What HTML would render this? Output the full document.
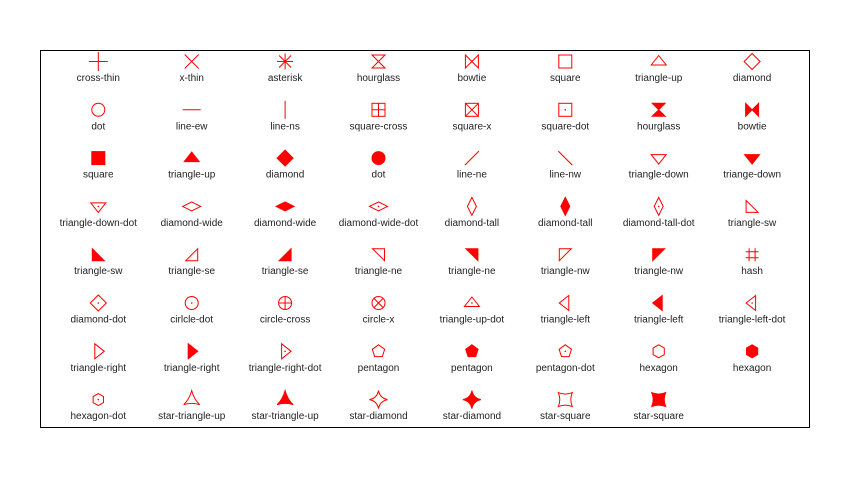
<!DOCTYPE html>
<html><head><meta charset="utf-8"><style>
html,body{margin:0;padding:0;background:#fff}
svg{display:block}
.o{fill:none;stroke:#f00;stroke-width:1}
.f{fill:#f00;stroke:#f00;stroke-width:1}
.d{fill:#f00}
text{font-family:"Liberation Sans",Arial,sans-serif;font-size:10px;fill:#222;text-anchor:middle}
</style></head><body>
<svg width="856" height="477" viewBox="0 0 856 477" xmlns="http://www.w3.org/2000/svg">
<rect x="40.5" y="50.5" width="769" height="377" fill="none" stroke="#000" stroke-width="1"/>
<defs>
<circle id="dt" r="0.8" class="d"/>
</defs>
<g transform="translate(98.3,61.5)"><path class="o" d="M-9.5,0H9.5M0,-9.5V9.5"/></g>
<g transform="translate(191.7,61.5)"><path class="o" d="M-7,-7L7,7M7,-7L-7,7"/></g>
<g transform="translate(285.1,61.5)"><path class="o" d="M-8,0H8M0,-8V8M-6,-6L6,6M6,-6L-6,6"/></g>
<g transform="translate(378.5,61.5)"><path class="o" d="M-6.5,-6.5H6.5L-6.5,6.5H6.5Z"/></g>
<g transform="translate(471.9,61.5)"><path class="o" d="M-6.5,-6.5V6.5L6.5,-6.5V6.5Z"/></g>
<g transform="translate(565.3,61.5)"><rect class="o" x="-6.5" y="-6.5" width="13" height="13"/></g>
<g transform="translate(658.7,61.5)"><path class="o" d="M-7.5,3.5H7.5L0,-6Z"/></g>
<g transform="translate(752.1,61.5)"><path class="o" d="M0,-8L8,0L0,8L-8,0Z"/></g>
<text x="98.3" y="81">cross-thin</text><text x="191.7" y="81">x-thin</text><text x="285.1" y="81">asterisk</text><text x="378.5" y="81">hourglass</text><text x="471.9" y="81">bowtie</text><text x="565.3" y="81">square</text><text x="658.7" y="81">triangle-up</text><text x="752.1" y="81">diamond</text>
<g transform="translate(98.3,109.8)"><circle class="o" r="6.5"/></g>
<g transform="translate(191.7,109.8)"><path class="o" d="M-9,0H9"/></g>
<g transform="translate(285.1,109.8)"><path class="o" d="M0,-9V9"/></g>
<g transform="translate(378.5,109.8)"><rect class="o" x="-6.5" y="-6.5" width="13" height="13"/><path class="o" d="M-6.5,0H6.5M0,-6.5V6.5"/></g>
<g transform="translate(471.9,109.8)"><rect class="o" x="-6.5" y="-6.5" width="13" height="13"/><path class="o" d="M-6.5,-6.5L6.5,6.5M6.5,-6.5L-6.5,6.5"/></g>
<g transform="translate(565.3,109.8)"><rect class="o" x="-6.5" y="-6.5" width="13" height="13"/><use href="#dt"/></g>
<g transform="translate(658.7,109.8)"><path class="f" d="M-6.5,-6.5H6.5L-6.5,6.5H6.5Z"/></g>
<g transform="translate(752.1,109.8)"><path class="f" d="M-6.5,-6.5V6.5L6.5,-6.5V6.5Z"/></g>
<text x="98.3" y="129.3">dot</text><text x="191.7" y="129.3">line-ew</text><text x="285.1" y="129.3">line-ns</text><text x="378.5" y="129.3">square-cross</text><text x="471.9" y="129.3">square-x</text><text x="565.3" y="129.3">square-dot</text><text x="658.7" y="129.3">hourglass</text><text x="752.1" y="129.3">bowtie</text>
<g transform="translate(98.3,158.1)"><rect class="f" x="-6.5" y="-6.5" width="13" height="13"/></g>
<g transform="translate(191.7,158.1)"><path class="f" d="M-7.5,3.5H7.5L0,-6Z"/></g>
<g transform="translate(285.1,158.1)"><path class="f" d="M0,-8L8,0L0,8L-8,0Z"/></g>
<g transform="translate(378.5,158.1)"><circle class="f" r="6.5"/></g>
<g transform="translate(471.9,158.1)"><path class="o" d="M-7,7L7,-7"/></g>
<g transform="translate(565.3,158.1)"><path class="o" d="M-7,-7L7,7"/></g>
<g transform="translate(658.7,158.1)"><path class="o" d="M-7.5,-3.5H7.5L0,6Z"/></g>
<g transform="translate(752.1,158.1)"><path class="f" d="M-7.5,-3.5H7.5L0,6Z"/></g>
<text x="98.3" y="177.6">square</text><text x="191.7" y="177.6">triangle-up</text><text x="285.1" y="177.6">diamond</text><text x="378.5" y="177.6">dot</text><text x="471.9" y="177.6">line-ne</text><text x="565.3" y="177.6">line-nw</text><text x="658.7" y="177.6">triangle-down</text><text x="752.1" y="177.6">triange-down</text>
<g transform="translate(98.3,206.4)"><path class="o" d="M-7.5,-3.5H7.5L0,6Z"/><use href="#dt"/></g>
<g transform="translate(191.7,206.4)"><path class="o" d="M0,-4.5L9,0L0,4.5L-9,0Z"/></g>
<g transform="translate(285.1,206.4)"><path class="f" d="M0,-4.5L9,0L0,4.5L-9,0Z"/></g>
<g transform="translate(378.5,206.4)"><path class="o" d="M0,-4.5L9,0L0,4.5L-9,0Z"/><use href="#dt"/></g>
<g transform="translate(471.9,206.4)"><path class="o" d="M0,-9L4.5,0L0,9L-4.5,0Z"/></g>
<g transform="translate(565.3,206.4)"><path class="f" d="M0,-9L4.5,0L0,9L-4.5,0Z"/></g>
<g transform="translate(658.7,206.4)"><path class="o" d="M0,-9L4.5,0L0,9L-4.5,0Z"/><use href="#dt"/></g>
<g transform="translate(752.1,206.4)"><path class="o" d="M-6,-6V6H6Z"/></g>
<text x="98.3" y="225.9">triangle-down-dot</text><text x="191.7" y="225.9">diamond-wide</text><text x="285.1" y="225.9">diamond-wide</text><text x="378.5" y="225.9">diamond-wide-dot</text><text x="471.9" y="225.9">diamond-tall</text><text x="565.3" y="225.9">diamond-tall</text><text x="658.7" y="225.9">diamond-tall-dot</text><text x="752.1" y="225.9">triangle-sw</text>
<g transform="translate(98.3,254.7)"><path class="f" d="M-6,-6V6H6Z"/></g>
<g transform="translate(191.7,254.7)"><path class="o" d="M6,-6V6H-6Z"/></g>
<g transform="translate(285.1,254.7)"><path class="f" d="M6,-6V6H-6Z"/></g>
<g transform="translate(378.5,254.7)"><path class="o" d="M-6,-6H6V6Z"/></g>
<g transform="translate(471.9,254.7)"><path class="f" d="M-6,-6H6V6Z"/></g>
<g transform="translate(565.3,254.7)"><path class="o" d="M-6,-6H6L-6,6Z"/></g>
<g transform="translate(658.7,254.7)"><path class="f" d="M-6,-6H6L-6,6Z"/></g>
<g transform="translate(752.1,254.7)"><path class="o" d="M-3,-6.5V6.5M3,-6.5V6.5M-6.5,-3H6.5M-6.5,3H6.5"/></g>
<text x="98.3" y="274.2">triangle-sw</text><text x="191.7" y="274.2">triangle-se</text><text x="285.1" y="274.2">triangle-se</text><text x="378.5" y="274.2">triangle-ne</text><text x="471.9" y="274.2">triangle-ne</text><text x="565.3" y="274.2">triangle-nw</text><text x="658.7" y="274.2">triangle-nw</text><text x="752.1" y="274.2">hash</text>
<g transform="translate(98.3,303)"><path class="o" d="M0,-8L8,0L0,8L-8,0Z"/><use href="#dt"/></g>
<g transform="translate(191.7,303)"><circle class="o" r="6.5"/><use href="#dt"/></g>
<g transform="translate(285.1,303)"><circle class="o" r="6.5"/><path class="o" d="M-6.5,0H6.5M0,-6.5V6.5"/></g>
<g transform="translate(378.5,303)"><circle class="o" r="6.5"/><path class="o" d="M-4.6,-4.6L4.6,4.6M4.6,-4.6L-4.6,4.6"/></g>
<g transform="translate(471.9,303)"><path class="o" d="M-7.5,3.5H7.5L0,-6Z"/><use href="#dt"/></g>
<g transform="translate(565.3,303)"><path class="o" d="M3.5,-7.5V7.5L-6,0Z"/></g>
<g transform="translate(658.7,303)"><path class="f" d="M3.5,-7.5V7.5L-6,0Z"/></g>
<g transform="translate(752.1,303)"><path class="o" d="M3.5,-7.5V7.5L-6,0Z"/><use href="#dt"/></g>
<text x="98.3" y="322.5">diamond-dot</text><text x="191.7" y="322.5">cirlcle-dot</text><text x="285.1" y="322.5">circle-cross</text><text x="378.5" y="322.5">circle-x</text><text x="471.9" y="322.5">triangle-up-dot</text><text x="565.3" y="322.5">triangle-left</text><text x="658.7" y="322.5">triangle-left</text><text x="752.1" y="322.5">triangle-left-dot</text>
<g transform="translate(98.3,351.3)"><path class="o" d="M-3.5,-7.5V7.5L6,0Z"/></g>
<g transform="translate(191.7,351.3)"><path class="f" d="M-3.5,-7.5V7.5L6,0Z"/></g>
<g transform="translate(285.1,351.3)"><path class="o" d="M-3.5,-7.5V7.5L6,0Z"/><use href="#dt"/></g>
<g transform="translate(378.5,351.3)"><path class="o" d="M0,-6.5L6.2,-2L3.8,5.3H-3.8L-6.2,-2Z"/></g>
<g transform="translate(471.9,351.3)"><path class="f" d="M0,-6.5L6.2,-2L3.8,5.3H-3.8L-6.2,-2Z"/></g>
<g transform="translate(565.3,351.3)"><path class="o" d="M0,-6.5L6.2,-2L3.8,5.3H-3.8L-6.2,-2Z"/><use href="#dt"/></g>
<g transform="translate(658.7,351.3)"><path class="o" d="M0,-6.5L5.6,-3.25V3.25L0,6.5L-5.6,3.25V-3.25Z"/></g>
<g transform="translate(752.1,351.3)"><path class="f" d="M0,-6.5L5.6,-3.25V3.25L0,6.5L-5.6,3.25V-3.25Z"/></g>
<text x="98.3" y="370.8">triangle-right</text><text x="191.7" y="370.8">triangle-right</text><text x="285.1" y="370.8">triangle-right-dot</text><text x="378.5" y="370.8">pentagon</text><text x="471.9" y="370.8">pentagon</text><text x="565.3" y="370.8">pentagon-dot</text><text x="658.7" y="370.8">hexagon</text><text x="752.1" y="370.8">hexagon</text>
<g transform="translate(98.3,399.6)"><path class="o" d="M0,-6L5.2,-3V3L0,6L-5.2,3V-3Z"/><use href="#dt"/></g>
<g transform="translate(191.7,399.6)"><path class="o" d="M0,-9Q2.5,0 8,5Q0,2.5 -8,5Q-2.5,0 0,-9Z"/></g>
<g transform="translate(285.1,399.6)"><path class="f" d="M0,-9Q2.5,0 8,5Q0,2.5 -8,5Q-2.5,0 0,-9Z"/></g>
<g transform="translate(378.5,399.6)"><path class="o" d="M0,-9Q1.5,-1.5 9,0Q1.5,1.5 0,9Q-1.5,1.5 -9,0Q-1.5,-1.5 0,-9Z"/></g>
<g transform="translate(471.9,399.6)"><path class="f" d="M0,-9Q1.5,-1.5 9,0Q1.5,1.5 0,9Q-1.5,1.5 -9,0Q-1.5,-1.5 0,-9Z"/></g>
<g transform="translate(565.3,399.6)"><path class="o" d="M-7,-7Q0,-4 7,-7Q4,0 7,7Q0,4 -7,7Q-4,0 -7,-7Z"/></g>
<g transform="translate(658.7,399.6)"><path class="f" d="M-7,-7Q0,-4 7,-7Q4,0 7,7Q0,4 -7,7Q-4,0 -7,-7Z"/></g>
<text x="98.3" y="419.1">hexagon-dot</text><text x="191.7" y="419.1">star-triangle-up</text><text x="285.1" y="419.1">star-triangle-up</text><text x="378.5" y="419.1">star-diamond</text><text x="471.9" y="419.1">star-diamond</text><text x="565.3" y="419.1">star-square</text><text x="658.7" y="419.1">star-square</text>
</svg>
</body></html>
